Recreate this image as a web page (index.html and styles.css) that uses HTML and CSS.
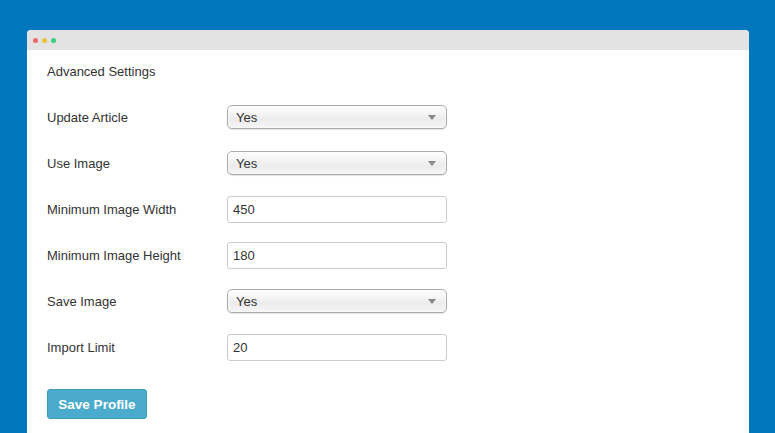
FILE: index.html
```html
<!DOCTYPE html>
<html>
<head>
<meta charset="utf-8">
<link rel="stylesheet" href="styles.css">
</head>
<body>
<div class="window">
  <div class="titlebar">
    <span class="dot red"></span><span class="dot yellow"></span><span class="dot green"></span>
  </div>
  <div class="content">
    <div class="heading">Advanced Settings</div>
    <div class="form">
      <div class="row"><label>Update Article</label><div class="select"><span>Yes</span><span class="arrow"></span></div></div>
      <div class="row"><label>Use Image</label><div class="select"><span>Yes</span><span class="arrow"></span></div></div>
      <div class="row"><label>Minimum Image Width</label><div class="input">450</div></div>
      <div class="row"><label>Minimum Image Height</label><div class="input">180</div></div>
      <div class="row"><label>Save Image</label><div class="select"><span>Yes</span><span class="arrow"></span></div></div>
      <div class="row"><label>Import Limit</label><div class="input">20</div></div>
    </div>
    <button class="save">Save Profile</button>
  </div>
</div>
</body>
</html>
```

FILE: styles.css
```css
html, body {
  margin: 0;
  padding: 0;
  height: 100%;
  overflow: hidden;
}
body {
  background: #0077be;
  font-family: "Liberation Sans", Arial, sans-serif;
  font-size: 13px;
  color: #333;
  padding: 30px 26px 0 27px;
  box-sizing: border-box;
}
.window {
  background: #fff;
  border-radius: 4px 4px 0 0;
  height: 420px;
  overflow: hidden;
}
.titlebar {
  height: 20px;
  background: #e3e3e3;
  display: flex;
  align-items: center;
  padding-left: 6px;
  gap: 4px;
}
.dot {
  width: 5px;
  height: 5px;
  border-radius: 50%;
  display: block;
}
.red { background: #ee6b6b; }
.yellow { background: #e7c03c; }
.green { background: #3bd17f; }
.content {
  padding: 0 20px;
}
.heading {
  height: 44px;
  line-height: 44px;
}
.form {
  display: flex;
  flex-direction: column;
}
.row {
  height: 46px;
  display: flex;
  align-items: center;
}
.row label {
  width: 180px;
  flex: none;
}
.select {
  width: 220px;
  height: 24px;
  border: 1px solid #aaa;
  border-radius: 5px;
  background: linear-gradient(#fff 0%, #f6f6f6 30%, #ececec 60%, #f4f4f4 100%);
  box-shadow: 0 0 3px #fff inset, 0 1px 1px rgba(0,0,0,0.1);
  display: flex;
  align-items: center;
  justify-content: space-between;
  padding: 0 10px 0 8px;
  box-sizing: border-box;
}
.arrow {
  width: 0;
  height: 0;
  border-left: 4px solid transparent;
  border-right: 4px solid transparent;
  border-top: 5px solid #888;
  margin-top: 1px;
}
.input {
  width: 220px;
  height: 27px;
  border: 1px solid #ccc;
  border-radius: 3px;
  box-sizing: border-box;
  padding-left: 5px;
  display: flex;
  align-items: center;
}
.save {
  margin-top: 19px;
  width: 100px;
  height: 30px;
  background: #4aabcc;
  border: 1px solid #3c9ab9;
  border-radius: 3px;
  color: #fff;
  font-family: "Liberation Sans", Arial, sans-serif;
  font-weight: bold;
  font-size: 13.5px;
  padding: 0;
}
```
